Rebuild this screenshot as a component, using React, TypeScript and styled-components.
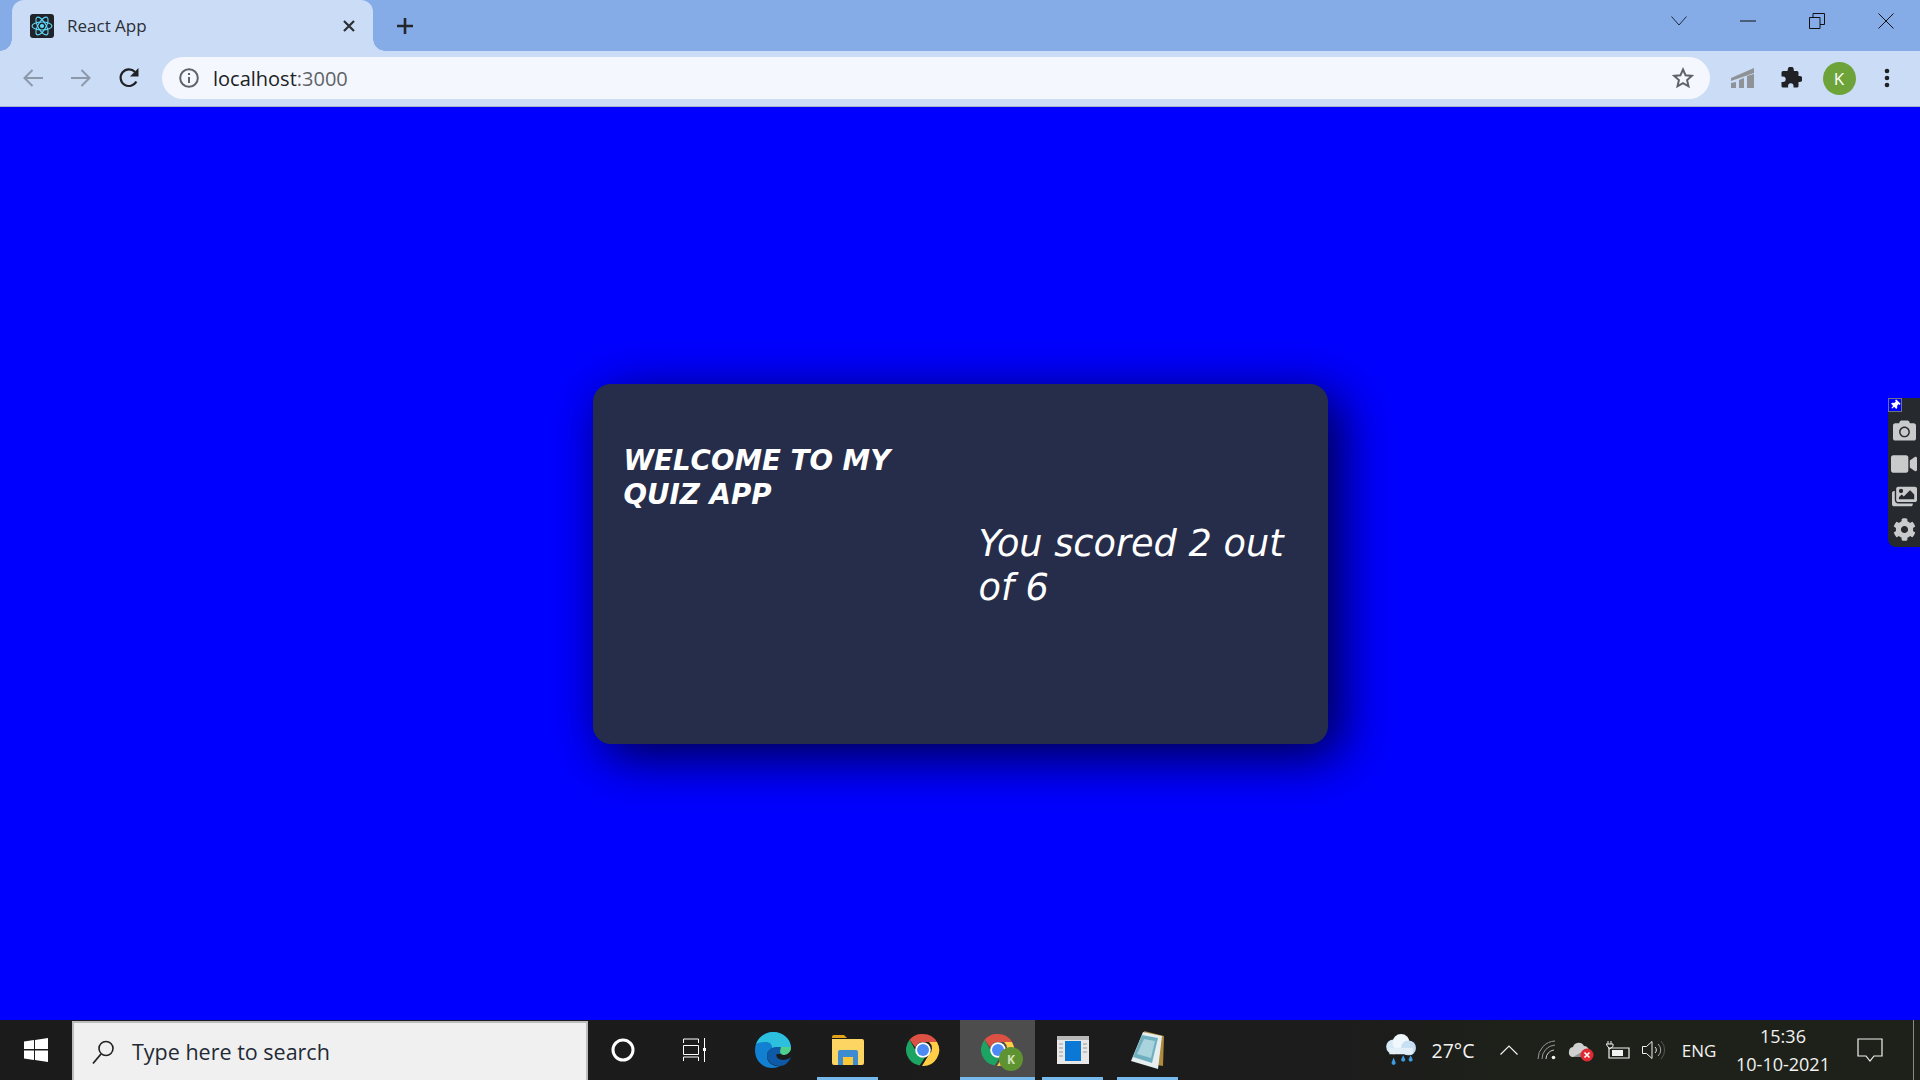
import React from 'react'
import styled, { createGlobalStyle } from 'styled-components'
import { FaCamera, FaVideo, FaImages, FaCog, FaThumbtack } from 'react-icons/fa'

const GlobalStyle = createGlobalStyle`
    html, body {
        margin: 0;
        padding: 0;
        overflow: hidden;
    }
    * {
        box-sizing: border-box;
    }
`

const Screen = styled.div`
    position: relative;
    width: 1920px;
    height: 1080px;
    display: flex;
    flex-direction: column;
    font-family: 'Open Sans', 'Noto Sans', sans-serif;
`

/* browser chrome */
const TabStrip = styled.div`
    height: 51px;
    flex: none;
    display: flex;
    background: #86ace8;
    padding-left: 12px;
`
const Tab = styled.div`
    position: relative;
    width: 361px;
    display: flex;
    align-items: center;
    padding: 0 17px 0 18px;
    background: #cadcf6;
    border-radius: 12px 12px 0 0;
    color: #2b2f36;
    font-size: 17px;
    &::before,
    &::after {
        content: '';
        position: absolute;
        bottom: 0;
        width: 12px;
        height: 12px;
        background: radial-gradient(circle at 0 0, transparent 11.5px, #cadcf6 12px);
    }
    &::before {
        left: -12px;
    }
    &::after {
        right: -12px;
        background: radial-gradient(circle at 100% 0, transparent 11.5px, #cadcf6 12px);
    }
`
const TabTitle = styled.span`
    flex: 1;
    margin-left: 13px;
`
const NewTab = styled.div`
    width: 64px;
    display: flex;
    align-items: center;
    justify-content: center;
`
const WindowControls = styled.div`
    margin-left: auto;
    display: flex;
`
const WindowButton = styled.div`
    width: 69px;
    height: 42px;
    display: flex;
    align-items: center;
    justify-content: center;
`
const Toolbar = styled.div`
    height: 56px;
    flex: none;
    display: flex;
    align-items: center;
    padding: 0 9px 1px;
    background: #cadcf6;
    border-bottom: 1px solid #a5b3c9;
`
const ToolButton = styled.div`
    width: 48px;
    height: 42px;
    flex: none;
    display: flex;
    align-items: center;
    justify-content: center;
`
const AddressBar = styled.div`
    flex: 1;
    height: 42px;
    margin: 0 9px;
    padding: 0 16px 0 17px;
    display: flex;
    align-items: center;
    border-radius: 21px;
    background: #f4f8fe;
    font-size: 20px;
    color: #202124;
`
const Url = styled.span`
    margin-left: 14px;
    flex: 1;
`
const Port = styled.span`
    color: #5f6368;
`
const Avatar = styled.div`
    width: 33px;
    height: 33px;
    border-radius: 50%;
    background: #6ea33a;
    color: #fff;
    font-size: 17px;
    display: flex;
    align-items: center;
    justify-content: center;
`

/* the quiz page */
const Page = styled.main`
    flex: 1;
    display: flex;
    align-items: center;
    justify-content: center;
    background: #0000ff;
`
const Card = styled.div`
    width: 735px;
    height: 360px;
    display: grid;
    grid-template-columns: 355px 1fr;
    padding: 0 29px 0 31px;
    background: #252d4a;
    border-radius: 18px;
    box-shadow: 12px 12px 51px 0 rgba(0, 0, 0, 0.75);
    color: #fff;
    font-family: 'DejaVu Sans', Verdana, sans-serif;
    font-style: italic;
`
const Title = styled.h1`
    margin: 60px 0 0;
    width: 300px;
    font-size: 27.7px;
    line-height: 34px;
    font-weight: bold;
`
const Score = styled.div`
    align-self: center;
    margin-top: 5px;
    font-size: 36.7px;
    line-height: 44px;
`

/* capture extension side panel */
const SidePanel = styled.aside`
    position: absolute;
    top: 398px;
    right: 0;
    width: 32px;
    height: 149px;
    padding-top: 16px;
    display: flex;
    flex-direction: column;
    background: #26292d;
    border-radius: 8px 0 0 8px;
    color: #c9cacc;
`
const PanelIcon = styled.div`
    height: 33px;
    display: flex;
    align-items: center;
    justify-content: center;
`
const Pin = styled.div`
    position: absolute;
    top: 0;
    left: 0;
    width: 14px;
    height: 14px;
    background: #0000ff;
    border: 1px solid #6f7480;
    color: #fff;
    display: flex;
    align-items: center;
    justify-content: center;
`
const PinIcon = styled(FaThumbtack)`
    transform: rotate(45deg);
`

/* windows taskbar */
const Taskbar = styled.footer`
    height: 60px;
    flex: none;
    display: flex;
    background: linear-gradient(90deg, #1b1b1b 0, #1c1c1c 70%, #1e2119 80%);
    color: #f2f2f2;
`
const StartButton = styled.div`
    width: 72px;
    display: flex;
    align-items: center;
    justify-content: center;
`
const SearchBox = styled.div`
    width: 516px;
    margin-top: 1px;
    padding-left: 17px;
    display: flex;
    align-items: center;
    gap: 17px;
    background: #f0f0f0;
    border: 2px solid #bcbcbc;
    border-bottom: 0;
    color: #1f2a36;
    font-size: 21.5px;
`
const TaskApps = styled.div`
    margin-left: -3px;
    display: flex;
`
const TaskApp = styled.div<{ $active?: boolean; $open?: boolean }>`
    position: relative;
    width: 75px;
    display: flex;
    align-items: center;
    justify-content: center;
    background: ${(p) => (p.$active ? '#4d4d4d' : 'transparent')};
    &::after {
        content: '';
        display: ${(p) => (p.$open ? 'block' : 'none')};
        position: absolute;
        bottom: 0;
        left: ${(p) => (p.$active ? '0' : '7px')};
        right: ${(p) => (p.$active ? '0' : '7px')};
        height: 3px;
        background: #76b9ed;
    }
`
const TaskViewIcon = styled.svg`
    margin-right: 5px;
`
const ChromeBadge = styled.span`
    position: absolute;
    left: 39px;
    top: 27px;
    width: 24px;
    height: 24px;
    border-radius: 50%;
    background: #5f9331;
    color: #cfe2b8;
    font-size: 12px;
    font-weight: 700;
    display: flex;
    align-items: center;
    justify-content: center;
`
const Tray = styled.div`
    margin-left: auto;
    display: flex;
`
const TrayItem = styled.div<{ $width: number; $size?: number }>`
    width: ${(p) => p.$width}px;
    display: flex;
    align-items: center;
    justify-content: center;
    font-size: ${(p) => p.$size ?? 17}px;
`
const Clock = styled.div`
    display: flex;
    flex-direction: column;
    align-items: center;
    gap: 4px;
    font-size: 18px;
    line-height: 24px;
`
const ShowDesktop = styled.div`
    width: 20px;
    display: flex;
    justify-content: center;
    padding-left: 6px;
    &::before {
        content: '';
        width: 1px;
        background: #8a8a8a;
    }
`

const ReactLogo = () => (
    <svg width="24" height="24" viewBox="0 0 24 24">
        <rect width="24" height="24" rx="3" fill="#20232a" />
        <g fill="none" stroke="#61dafb" strokeWidth="1.1">
            <ellipse cx="12" cy="12" rx="10" ry="4" />
            <ellipse cx="12" cy="12" rx="10" ry="4" transform="rotate(60 12 12)" />
            <ellipse cx="12" cy="12" rx="10" ry="4" transform="rotate(120 12 12)" />
        </g>
        <circle cx="12" cy="12" r="2.1" fill="#61dafb" />
    </svg>
)

const ChromeLogo = () => (
    <svg width="34" height="34" viewBox="0 0 34 34">
        <path d="M17 1a16 16 0 0 1 14 8H17a8 8 0 0 0-7.6 5.5L3.5 6.8A16 16 0 0 1 17 1z" fill="#dd5144" />
        <path d="M3.5 6.8l6.8 11.8A8 8 0 0 0 19 24.6L13.6 32.6A16 16 0 0 1 3.5 6.8z" fill="#1da462" />
        <path d="M31 9a16 16 0 0 1-15 24l7-11.5A8 8 0 0 0 23 9z" fill="#ffcd46" />
        <circle cx="17" cy="17" r="7.8" fill="#fff" />
        <circle cx="17" cy="17" r="6" fill="#4c8bf5" />
    </svg>
)

const App: React.FC = () => (
    <Screen>
        <GlobalStyle />
        <TabStrip>
            <Tab>
                <ReactLogo />
                <TabTitle>React App</TabTitle>
                <svg width="14" height="14" viewBox="0 0 14 14">
                    <path d="M2 2l10 10M12 2L2 12" stroke="#2b2f36" strokeWidth="2.2" />
                </svg>
            </Tab>
            <NewTab>
                <svg width="18" height="18" viewBox="0 0 18 18">
                    <path d="M9 1v16M1 9h16" stroke="#23262b" strokeWidth="2.6" />
                </svg>
            </NewTab>
            <WindowControls>
                <WindowButton>
                    <svg width="16" height="10" viewBox="0 0 16 10">
                        <path d="M.5.5L8 9l7.5-8.5" fill="none" stroke="#1d2a3f" />
                    </svg>
                </WindowButton>
                <WindowButton>
                    <svg width="16" height="2" viewBox="0 0 16 2">
                        <path d="M0 1h16" stroke="#111" />
                    </svg>
                </WindowButton>
                <WindowButton>
                    <svg width="16" height="16" viewBox="0 0 16 16">
                        <path d="M.5 4.5H11v11H.5zM4 4.5V.5h11.5v11H11" fill="none" stroke="#111" />
                    </svg>
                </WindowButton>
                <WindowButton>
                    <svg width="16" height="16" viewBox="0 0 16 16">
                        <path d="M.5.5l15 15M15.5.5l-15 15" stroke="#111" />
                    </svg>
                </WindowButton>
            </WindowControls>
        </TabStrip>
        <Toolbar>
            <ToolButton>
                <svg width="22" height="20" viewBox="0 0 22 20">
                    <path d="M21 10H3M10.5 2L2.5 10l8 8" fill="none" stroke="#8d98a8" strokeWidth="2" />
                </svg>
            </ToolButton>
            <ToolButton>
                <svg width="22" height="20" viewBox="0 0 22 20">
                    <path d="M1 10h18M11.5 2l8 8-8 8" fill="none" stroke="#8d98a8" strokeWidth="2" />
                </svg>
            </ToolButton>
            <ToolButton>
                <svg width="22" height="22" viewBox="0 0 22 22">
                    <path d="M18.3 14.5A8.3 8.3 0 1 1 17 5" fill="none" stroke="#202124" strokeWidth="2.2" />
                    <path d="M20.5 1v8.5H12z" fill="#202124" />
                </svg>
            </ToolButton>
            <AddressBar>
                <svg width="20" height="20" viewBox="0 0 20 20">
                    <circle cx="10" cy="10" r="8.8" fill="none" stroke="#5f6368" strokeWidth="2" />
                    <path d="M9 5h2v2H9zM9 9h2v6H9z" fill="#5f6368" />
                </svg>
                <Url>
                    localhost<Port>:3000</Port>
                </Url>
                <svg width="22" height="22" viewBox="0 0 22 22">
                    <path
                        d="M11 2.5l2.6 5.8 6.2.6-4.7 4.2 1.4 6.2L11 16.1l-5.5 3.2 1.4-6.2-4.7-4.2 6.2-.6z"
                        fill="none"
                        stroke="#5f6368"
                        strokeWidth="2"
                    />
                </svg>
            </AddressBar>
            <ToolButton>
                <svg width="24" height="20" viewBox="0 0 24 20">
                    <path d="M0 20v-5l5-1v6zM8 20v-8l5-2v10zM16 20V8l7-2v14zM0 10L23 0v5L0 13z" fill="#8f9296" />
                </svg>
            </ToolButton>
            <ToolButton>
                <svg width="22" height="22" viewBox="0 0 22 22">
                    <path
                        d="M8 1.5a3 3 0 0 1 5.8 1V4H17a1.5 1.5 0 0 1 1.5 1.5V9h1a3 3 0 0 1 0 6h-1v4a1.5 1.5 0 0 1-1.5 1.5h-3.5V19a2.7 2.7 0 0 0-5.400 0v1.500H3A1.500 1.500 0 0 1 1.500 19v-4H3a2.700 2.700 0 0 0 0-5.400H1.500V5.500A1.500 1.500 0 0 1 3 4h4.500z"
                        fill="#202124"
                    />
                </svg>
            </ToolButton>
            <ToolButton>
                <Avatar>K</Avatar>
            </ToolButton>
            <ToolButton>
                <svg width="6" height="20" viewBox="0 0 6 20">
                    <circle cx="3" cy="3" r="2.3" fill="#202124" />
                    <circle cx="3" cy="10" r="2.3" fill="#202124" />
                    <circle cx="3" cy="17" r="2.3" fill="#202124" />
                </svg>
            </ToolButton>
        </Toolbar>

        <Page>
            <Card>
                <Title>WELCOME TO MY QUIZ APP</Title>
                <Score>You scored 2 out of 6</Score>
            </Card>
        </Page>

        <SidePanel>
            <Pin>
                <PinIcon size={10} />
            </Pin>
            <PanelIcon>
                <FaCamera size={23} />
            </PanelIcon>
            <PanelIcon>
                <FaVideo size={26} />
            </PanelIcon>
            <PanelIcon>
                <FaImages size={25} />
            </PanelIcon>
            <PanelIcon>
                <FaCog size={23} />
            </PanelIcon>
        </SidePanel>

        <Taskbar>
            <StartButton>
                <svg width="24" height="24" viewBox="0 0 24 24">
                    <path d="M0 3.5l10-1.400V11H0zM11 2l13-2v11H11zM0 12.5h10v9.400L0 20.500zM11 12.500h13V24l-13-2z" fill="#fff" />
                </svg>
            </StartButton>
            <SearchBox>
                <svg width="24" height="26" viewBox="0 0 24 26">
                    <circle cx="15" cy="9.5" r="7" fill="none" stroke="#222" strokeWidth="1.6" />
                    <path d="M10 15L2 24.5" stroke="#222" strokeWidth="1.8" />
                </svg>
                Type here to search
            </SearchBox>
            <TaskApps>
                <TaskApp>
                    <svg width="24" height="24" viewBox="0 0 24 24">
                        <circle cx="12" cy="12" r="10" fill="none" stroke="#fff" strokeWidth="3" />
                    </svg>
                </TaskApp>
                <TaskApp>
                    <TaskViewIcon width="24" height="24" viewBox="0 0 24 24">
                        <path d="M.5 5V1h15v4M.5 23v-4h15v4M.5 7.5h15v9H.5zM21.5 0v24" fill="none" stroke="#fff" />
                        <path d="M20 10h3v3h-3z" fill="#fff" />
                    </TaskViewIcon>
                </TaskApp>
                <TaskApp>
                    <svg width="36" height="36" viewBox="0 0 36 36">
                        <path d="M18 0C8 0 0 8 0 18c0 11 8 18 17 18 3 0 6-1 8-2-8 1-13-4-13-10 0-4 3-8 8-8h16C36 7 28 0 18 0z" fill="#1180d0" />
                        <path d="M1 12C4 4 12 0 18 0c10 0 18 7 18 16 0 4-4 6-8 6H16c3-8 0-12-5-12-4 0-8 1-10 2z" fill="#2cc0de" />
                        <path d="M12 24c0-5 4-9 9-9h15c0 3-3 7-8 7h-6c-2 2 1 6 6 6 3 0 6-1 8-3-2 5-6 9-11 9-8 0-13-5-13-10z" fill="#0f5aa6" />
                        <path d="M26 15h10c0 4-3 8-7 8-3 0-4-2-4-4z" fill="#4fd18b" />
                    </svg>
                </TaskApp>
                <TaskApp $open>
                    <svg width="32" height="30" viewBox="0 0 32 30">
                        <path d="M0 2a2 2 0 0 1 2-2h10l3 3H0z" fill="#e3a21a" />
                        <path d="M0 4h30a2 2 0 0 1 2 2v22a2 2 0 0 1-2 2H2a2 2 0 0 1-2-2z" fill="#fdd563" />
                        <path d="M6 30V17a2 2 0 0 1 2-2h16a2 2 0 0 1 2 2v13h-5v-8H11v8z" fill="#3d8bd1" />
                        <path d="M11 22h10v8H11z" fill="#fcc838" />
                    </svg>
                </TaskApp>
                <TaskApp>
                    <ChromeLogo />
                </TaskApp>
                <TaskApp $active $open>
                    <ChromeLogo />
                    <ChromeBadge>K</ChromeBadge>
                </TaskApp>
                <TaskApp $open>
                    <svg width="32" height="28" viewBox="0 0 32 28">
                        <path d="M0 0h32v28H0z" fill="#e8e8e8" />
                        <path d="M0 0h32v4H0z" fill="#b8b8b8" />
                        <path d="M8 5h16v20H8z" fill="#0b78d6" />
                        <path d="M2 8h4M2 12h4M2 16h4M2 20h4M26 8h4M26 12h4M26 16h4" stroke="#9a9a9a" />
                    </svg>
                </TaskApp>
                <TaskApp $open>
                    <svg width="34" height="38" viewBox="0 0 34 38">
                        <path d="M13 0l20 5-1 30-6-1z" fill="#b08a3a" />
                        <path d="M12 1l19 4-4 33-27-8z" fill="#e6eef0" />
                        <path d="M11 4l16 3-6 25L2 26z" fill="#6fb0c0" />
                        <path d="M13 8l11 2-4 17L6 23z" fill="#a9d3dd" />
                    </svg>
                </TaskApp>
            </TaskApps>
            <Tray>
                <TrayItem $width={40}>
                    <svg width="34" height="34" viewBox="0 0 32 32">
                        <circle cx="10" cy="13" r="7" fill="#d7eaf8" />
                        <circle cx="17" cy="9" r="8" fill="#f0f7fd" />
                        <circle cx="24" cy="14" r="7" fill="#c6dff2" />
                        <path d="M6 14h22v6H6z" fill="#e2eff9" />
                        <path d="M10 23l2 5a2 2 0 1 1-4 0zM19 21l2 4a2 2 0 1 1-4 0zM26 21l2 4a2 2 0 1 1-4 0z" fill="#3d9be0" />
                    </svg>
                </TrayItem>
                <TrayItem $width={66} $size={19.5}>27°C</TrayItem>
                <TrayItem $width={46}>
                    <svg width="18" height="10" viewBox="0 0 18 10">
                        <path d="M.5 9.5L9 1l8.5 8.5" fill="none" stroke="#f2f2f2" strokeWidth="1.2" />
                    </svg>
                </TrayItem>
                <TrayItem $width={30}>
                    <svg width="20" height="20" viewBox="0 0 20 20">
                        <path d="M1 19A18 18 0 0 1 18 1M5 19A14 14 0 0 1 18 5" fill="none" stroke="#999" />
                        <path d="M9 19a9 9 0 0 1 8-9" fill="none" stroke="#ccc" />
                        <circle cx="16.5" cy="17.5" r="1.8" fill="#f2f2f2" />
                    </svg>
                </TrayItem>
                <TrayItem $width={38}>
                    <svg width="26" height="24" viewBox="0 0 26 24">
                        <path d="M1 14a5 5 0 0 1 4-5 6 6 0 0 1 11-1 5 5 0 0 1 5 5l-3 6H5a4 4 0 0 1-4-5z" fill="#d0d0d0" />
                        <path d="M5 19l14-8 1 2-3 6z" fill="#8f8f8f" />
                        <circle cx="19" cy="17" r="6.5" fill="#e02b36" />
                        <path d="M16.5 14.5l5 5M21.5 14.5l-5 5" stroke="#fff" strokeWidth="1.6" />
                    </svg>
                </TrayItem>
                <TrayItem $width={36}>
                    <svg width="24" height="20" viewBox="0 0 24 20">
                        <path d="M3 8h20v10H3z" fill="none" stroke="#f2f2f2" strokeWidth="1.2" />
                        <path d="M6 10h11v6H6z" fill="#f2f2f2" />
                        <path d="M2 1v3M5 1v3M0 4h7v2.5L3.5 9z" stroke="#f2f2f2" fill="none" />
                    </svg>
                </TrayItem>
                <TrayItem $width={36}>
                    <svg width="24" height="20" viewBox="0 0 24 20">
                        <path d="M.5 6.5h4L10 1.5v17l-5.500-5h-4z" fill="none" stroke="#f2f2f2" />
                        <path d="M13 7a4 4 0 0 1 0 6" fill="none" stroke="#e8e8e8" />
                        <path d="M16 4a8 8 0 0 1 0 12" fill="none" stroke="#a8a8a8" />
                        <path d="M19 1a13 13 0 0 1 0 18" fill="none" stroke="#555" />
                    </svg>
                </TrayItem>
                <TrayItem $width={54}>ENG</TrayItem>
                <TrayItem $width={114}>
                    <Clock>
                        <span>15:36</span>
                        <span>10-10-2021</span>
                    </Clock>
                </TrayItem>
                <TrayItem $width={60}>
                    <svg width="26" height="25" viewBox="0 0 26 25">
                        <path d="M1 1h24v17H17l-4 5-4-5H1z" fill="none" stroke="#f2f2f2" strokeWidth="1.2" />
                    </svg>
                </TrayItem>
                <ShowDesktop />
            </Tray>
        </Taskbar>
    </Screen>
)

export default App
